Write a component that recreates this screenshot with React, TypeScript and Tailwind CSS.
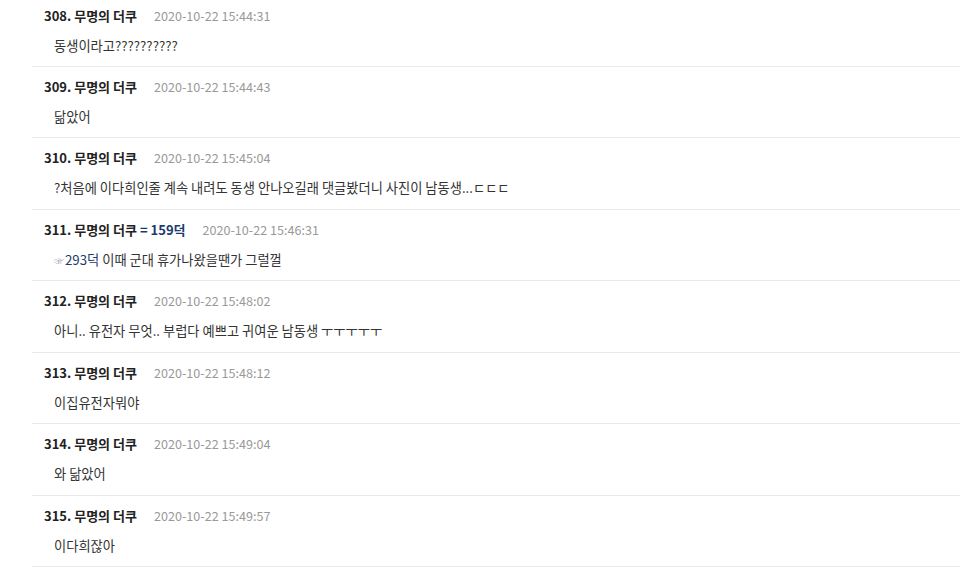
import React from 'react'

interface Comment {
  no: number
  name: string
  point?: string
  date: string
  body: React.ReactNode
}

const comments: Comment[] = [
  { no: 308, name: '무명의 더쿠', date: '2020-10-22 15:44:31', body: '동생이라고??????????' },
  { no: 309, name: '무명의 더쿠', date: '2020-10-22 15:44:43', body: '닮았어' },
  {
    no: 310,
    name: '무명의 더쿠',
    date: '2020-10-22 15:45:04',
    body: '?처음에 이다희인줄 계속 내려도 동생 안나오길래 댓글봤더니 사진이 남동생...ㄷㄷㄷ',
  },
  {
    no: 311,
    name: '무명의 더쿠',
    point: '= 159덕',
    date: '2020-10-22 15:46:31',
    body: (
      <>
        <span className="text-[10px] text-[#9aa3b5] mr-[1px]">☞</span>
        <span className="text-[#1d3a6e]">293덕</span> 이때 군대 휴가나왔을땐가 그럴껄
      </>
    ),
  },
  {
    no: 312,
    name: '무명의 더쿠',
    date: '2020-10-22 15:48:02',
    body: '아니.. 유전자 무엇.. 부럽다 예쁘고 귀여운 남동생 ㅜㅜㅜㅜㅜ',
  },
  { no: 313, name: '무명의 더쿠', date: '2020-10-22 15:48:12', body: '이집유전자뭐야' },
  { no: 314, name: '무명의 더쿠', date: '2020-10-22 15:49:04', body: '와 닮았어' },
  { no: 315, name: '무명의 더쿠', date: '2020-10-22 15:49:57', body: '이다희잖아' },
]

const CommentRow: React.FC<{ c: Comment }> = ({ c }) => (
  <div className="h-[71.43px] border-b border-[#e9e9e9] pl-[12px] pt-[11px] box-border">
    {/* 헤더 */}
    <div className="flex items-center h-[17px] leading-[17px]">
      <span className="text-[13px] font-bold text-[#222]">
        {c.no}. {c.name}
        {c.point && <span className="text-[#1d3a6e]"> {c.point}</span>}
      </span>
      <span className="ml-[17px] text-[12.6px] text-[#999]">{c.date}</span>
    </div>

    {/* 본문 */}
    <div className="mt-[13px] pl-[10px] h-[17px] leading-[17px] text-[13.25px] text-[#333]">{c.body}</div>
  </div>
)

export default function App() {
  return (
    <div
      className="w-[960px] h-[567px] overflow-hidden bg-white"
      style={{ fontFamily: '"Noto Sans CJK KR", "Noto Sans", sans-serif' }}
    >
      <div className="ml-[32px] mt-[-4.43px]">
        {comments.map(c => (
          <CommentRow key={c.no} c={c} />
        ))}
      </div>
    </div>
  )
}
